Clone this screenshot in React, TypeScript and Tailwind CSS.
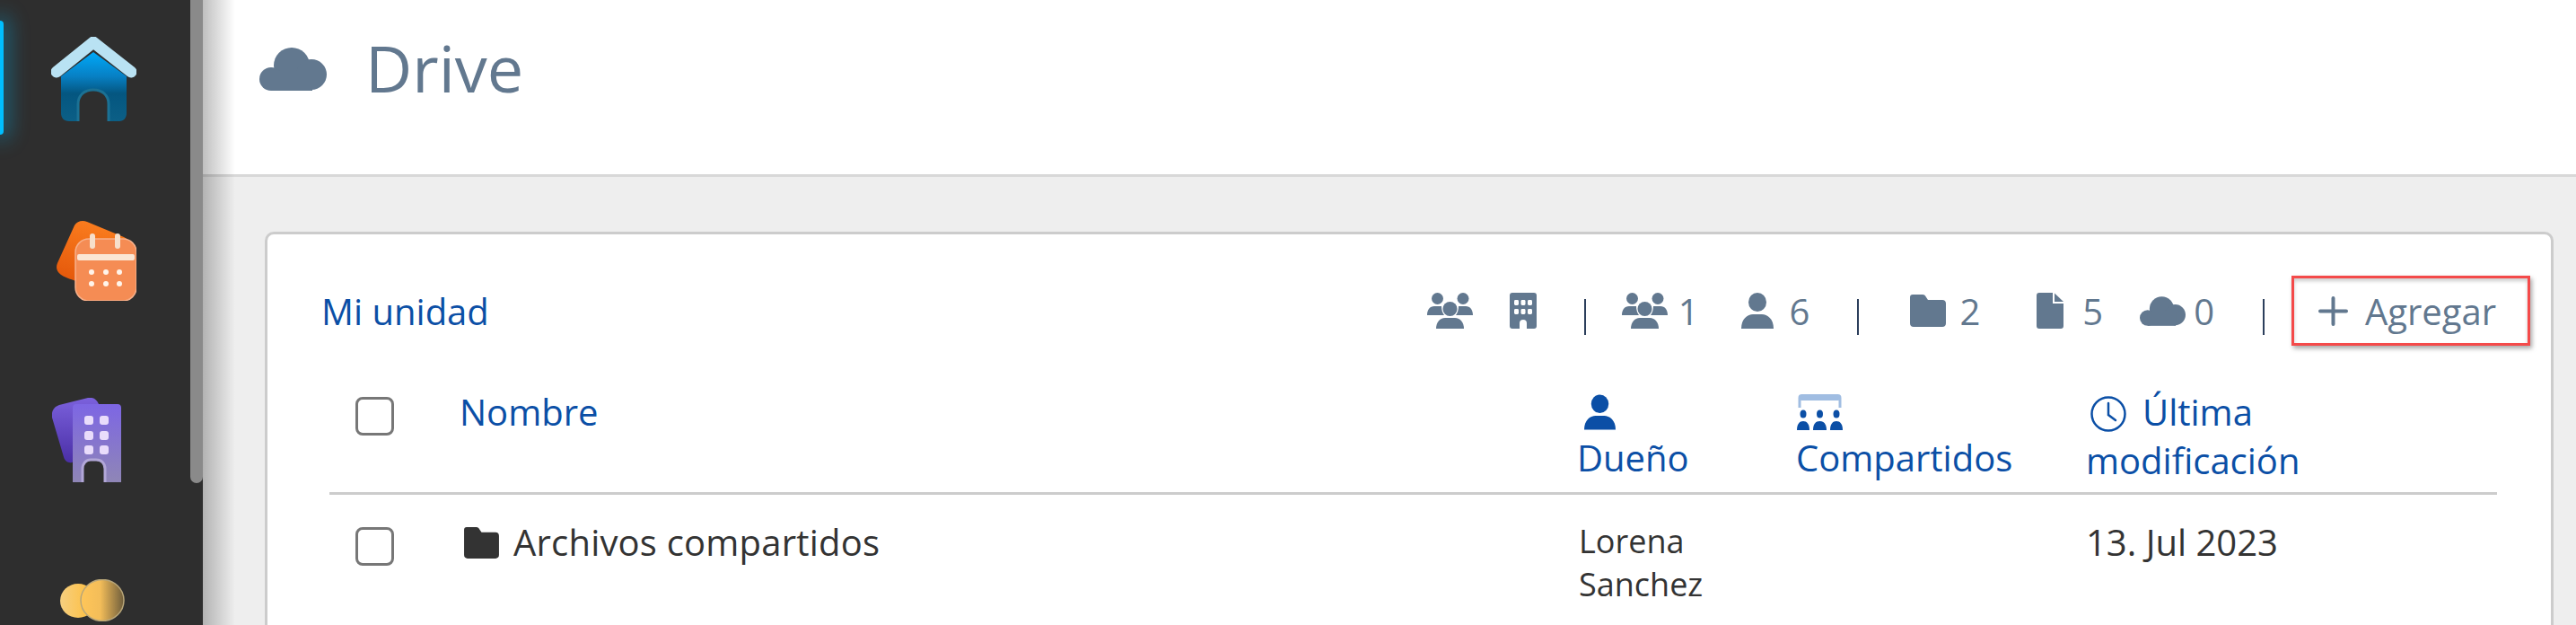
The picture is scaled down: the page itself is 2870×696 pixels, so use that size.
import React from "react";

const SLATE = "#62788f";
const BLUE = "#0b4fa6";

function Person({ w, h, color = SLATE }: { w: number; h: number; color?: string }) {
  return (
    <svg width={w} height={h} viewBox="0 0 36 40" className="block shrink-0" aria-hidden>
      <ellipse cx="18" cy="10.5" rx="10" ry="10.5" fill={color} />
      <path d="M0 40C0 29 7 24 13 24H23C29 24 36 29 36 40Z" fill={color} />
    </svg>
  );
}

function Group() {
  return (
    <svg width="51" height="40" viewBox="0 0 51 40" className="block shrink-0" aria-hidden>
      <g fill={SLATE}>
        <ellipse cx="11.5" cy="6.5" rx="6.5" ry="6.5" />
        <ellipse cx="40" cy="6.5" rx="6.5" ry="6.5" />
        <path d="M0 25C0 19 3 15 8 15H16C16 19 17 22 19 25Z" />
        <path d="M51 25C51 19 48 15 43 15H35C35 19 34 22 32 25Z" />
        <ellipse cx="25.5" cy="18" rx="8" ry="8" />
        <path d="M10 40C10 33 14 28 20 28H31C37 28 41 33 41 40Z" />
      </g>
    </svg>
  );
}

function Building() {
  return (
    <svg width="30" height="40" viewBox="0 0 30 40" className="block shrink-0" aria-hidden>
      <path d="M3 0H27a3 3 0 0 1 3 3V37a3 3 0 0 1-3 3H19V34a4 4 0 0 0-8 0V40H3a3 3 0 0 1-3-3V3a3 3 0 0 1 3-3Z" fill={SLATE} />
      <g fill="#fff">
        <rect x="5" y="8" width="5" height="6" rx="1.4" /><rect x="12.5" y="8" width="5" height="6" rx="1.4" /><rect x="20" y="8" width="5" height="6" rx="1.4" />
        <rect x="5" y="18" width="5" height="6" rx="1.4" /><rect x="12.5" y="18" width="5" height="6" rx="1.4" /><rect x="20" y="18" width="5" height="6" rx="1.4" />
      </g>
    </svg>
  );
}

function Folder({ w, h, color }: { w: number; h: number; color: string }) {
  return (
    <svg width={w} height={h} viewBox="0 0 40 36" className="block shrink-0" aria-hidden>
      <path d="M3 0H14C16 0 17 1 18 3L20 6H36C38.500 6 40 7.500 40 10V32C40 34.500 38.500 36 36 36H4C1.500 36 0 34.500 0 32V3C0 1 1 0 3 0Z" fill={color} />
    </svg>
  );
}

function FileIcon() {
  return (
    <svg width="30" height="40" viewBox="0 0 30 40" className="block shrink-0" aria-hidden>
      <path d="M3 0H18V12H30V37a3 3 0 0 1-3 3H3a3 3 0 0 1-3-3V3a3 3 0 0 1 3-3Z" fill={SLATE} />
      <path d="M20 0.500L30 10H20Z" fill={SLATE} />
    </svg>
  );
}

function Cloud({ w, h }: { w: number; h: number }) {
  return (
    <svg width={w} height={h} viewBox="0 0 75 48" className="block shrink-0" aria-hidden>
      <g fill={SLATE}>
        <circle cx="36" cy="20" r="20" />
        <circle cx="58" cy="30" r="17" />
        <circle cx="13" cy="35" r="13" />
        <rect x="13" y="26" width="46" height="22" />
      </g>
    </svg>
  );
}

function Sep({ ml }: { ml: string }) {
  return <span className={`block h-[40px] w-[2px] shrink-0 translate-y-[7px] bg-[#2c3f5c] ${ml}`} />;
}

function Num({ n, ml }: { n: string; ml: string }) {
  return <span className={`text-[40px] font-normal leading-[47px] text-[#62788f] ${ml}`}>{n}</span>;
}

function Checkbox({ mt }: { mt: string }) {
  return <span className={`block h-[43px] w-[43px] rounded-[8px] border-[3px] border-[#777] bg-white ${mt}`} />;
}

function HomeIcon() {
  return (
    <svg width="95" height="94" viewBox="0 0 95 94" className="block" aria-hidden>
      <defs>
        <linearGradient id="homeBody" x1="0" y1="0" x2="0" y2="1">
          <stop offset="0" stopColor="#00a9f9" />
          <stop offset="0.35" stopColor="#0780c4" />
          <stop offset="0.6" stopColor="#045680" />
          <stop offset="1" stopColor="#0c5f86" />
        </linearGradient>
      </defs>
      <path d="M11 44L47 17L84 44V85C84 90 81 94 76 94H64V75C64 65 57 59 47 59C37 59 30 65 30 75V94H20C14 94 11 90 11 85Z" fill="url(#homeBody)" />
      <path d="M30 94V75C30 65 37 59 47 59C57 59 64 65 64 75V94" fill="none" stroke="#1b7194" strokeWidth="3" />
      <path d="M6 39L47 6L89 39" fill="none" stroke="#b9e2f3" strokeWidth="13" strokeLinecap="round" strokeLinejoin="round" />
    </svg>
  );
}

function CalendarIcon() {
  return (
    <svg width="89" height="89" viewBox="0 0 89 89" className="block" aria-hidden>
      <defs>
        <linearGradient id="calBack" x1="0.6" y1="0" x2="0.3" y2="1">
          <stop offset="0" stopColor="#fb7e1f" />
          <stop offset="1" stopColor="#e4570a" />
        </linearGradient>
      </defs>
      <path d="M20 5C23 0 29-1 34 1L75 18C80 20 82 25 82 30L50 70C44 75 12 65 5 60C0 56-1 52 1 47Z" fill="url(#calBack)" />
      <rect x="21" y="20" width="68" height="69" rx="15" fill="#f58c54" stroke="#f7b08a" strokeWidth="1.500" />
      <rect x="23" y="37" width="64" height="7" rx="2" fill="#fbe6d4" />
      <rect x="37" y="14" width="6" height="17" rx="3" fill="#f6dfcb" />
      <rect x="65" y="14" width="6" height="17" rx="3" fill="#f6dfcb" />
      <g fill="#fff4ea">
        <circle cx="39" cy="57" r="3" /><circle cx="55" cy="57" r="3" /><circle cx="70" cy="57" r="3" />
        <circle cx="39" cy="70" r="3" /><circle cx="55" cy="70" r="3" /><circle cx="70" cy="70" r="3" />
      </g>
    </svg>
  );
}

function OfficeIcon() {
  return (
    <svg width="77" height="94" viewBox="0 0 77 94" className="block" aria-hidden>
      <defs>
        <linearGradient id="offBack" x1="0" y1="0" x2="0" y2="1">
          <stop offset="0" stopColor="#7b61dc" />
          <stop offset="1" stopColor="#4a2fa6" />
        </linearGradient>
        <linearGradient id="offFront" x1="0" y1="0" x2="0" y2="1">
          <stop offset="0" stopColor="#7d66e4" />
          <stop offset="1" stopColor="#8f86b6" />
        </linearGradient>
      </defs>
      <path d="M8 8L40 0C46-1 50 2 52 7L60 60L22 72C18 73 14 70 13 66L0 22C-1 15 2 10 8 8Z" fill="url(#offBack)" />
      <path d="M27 7H73C75.500 7 77 8.500 77 11V94H58V79C58 74 54 70 50 70H42C38 70 35 74 35 79V94H23V11C23 8.500 24.500 7 27 7Z" fill="url(#offFront)" />
      <path d="M34 94V79C34 73 38 69 43 69H49C55 69 59 73 59 79V94" fill="none" stroke="#b2a7d8" strokeWidth="3" />
      <g fill="#e9dcfb">
        <rect x="36" y="20" width="10" height="10" rx="3" /><rect x="53" y="20" width="10" height="10" rx="3" />
        <rect x="36" y="37" width="10" height="10" rx="3" /><rect x="53" y="37" width="10" height="10" rx="3" />
        <rect x="36" y="53" width="10" height="10" rx="3" /><rect x="53" y="53" width="10" height="10" rx="3" />
      </g>
    </svg>
  );
}

function CoinsIcon() {
  return (
    <svg width="72" height="47" viewBox="0 0 72 47" className="block" aria-hidden>
      <defs>
        <linearGradient id="coinA" x1="0" y1="0" x2="1" y2="0">
          <stop offset="0" stopColor="#f6cf80" />
          <stop offset="1" stopColor="#ffbc35" />
        </linearGradient>
        <linearGradient id="coinB" x1="0" y1="0" x2="1" y2="0">
          <stop offset="0" stopColor="#ffc659" />
          <stop offset="0.45" stopColor="#f3bd59" />
          <stop offset="1" stopColor="#6e5d3c" />
        </linearGradient>
      </defs>
      <ellipse cx="20" cy="24" rx="20" ry="19" fill="url(#coinA)" />
      <ellipse cx="47" cy="23.500" rx="24" ry="23" fill="url(#coinB)" stroke="#b8a679" strokeWidth="1.500" />
    </svg>
  );
}

export default function App() {
  return (
    <div className="flex h-[696px] w-[2870px] overflow-hidden bg-[#2e2e2e] font-['Open_Sans',sans-serif] text-[40px] font-normal text-[#333]">
      <aside className="flex w-[226px] shrink-0 items-start bg-[#2e2e2e]">
        <div className="relative h-full w-[212px] shrink-0">
          <span className="absolute left-0 top-[23px] h-[127px] w-[4px] rounded-r-[4px] bg-[#00bfff] shadow-[0_0_22px_6px_rgba(0,190,255,0.4)]" />
          <nav className="flex flex-col pt-[41px]">
            <div className="ml-[57px]"><HomeIcon /></div>
            <div className="ml-[63px] mt-[111px]"><CalendarIcon /></div>
            <div className="ml-[58px] mt-[108px]"><OfficeIcon /></div>
            <div className="ml-[67px] mt-[108px]"><CoinsIcon /></div>
          </nav>
        </div>
        <div className="h-[538px] w-[14px] shrink-0 rounded-b-[7px] bg-[#8a8a8a]" />
      </aside>

      <main className="relative flex min-w-0 flex-1 flex-col bg-[#eeeeee]">
        <span className="pointer-events-none absolute inset-y-0 left-0 w-[36px] bg-linear-to-r from-black/25 to-transparent" />
        <header className="flex h-[197px] shrink-0 items-start border-b-[3px] border-[#d8d8d8] bg-white pl-[63px]">
          <div className="mt-[53px]"><Cloud w={75} h={48} /></div>
          <h1 className="ml-[43px] mt-[26px] text-[72px] font-normal leading-[98px] text-[#62788f]">Drive</h1>
        </header>

        <section className="ml-[69px] mt-[61px] h-[600px] w-[2550px] shrink-0 rounded-t-[10px] border-x-[3px] border-t-[3px] border-[#cccccc] bg-white pt-[46px]">
          <div className="flex h-[78px] items-center">
            <a className="ml-[60px] pt-[2px] text-[40px] font-normal text-[#0b4fa6]">Mi unidad</a>
            <div className="ml-auto mr-[23px] flex items-center">
              <Group />
              <span className="ml-[41.5px]"><Building /></span>
              <Sep ml="ml-[52.5px]" />
              <span className="ml-[40.5px]"><Group /></span>
              <Num n="1" ml="ml-[11.5px]" />
              <span className="ml-[47.5px]"><Person w={36} h={40} /></span>
              <Num n="6" ml="ml-[17.5px]" />
              <Sep ml="ml-[53px]" />
              <span className="ml-[57px]"><Folder w={40} h={36} color={SLATE} /></span>
              <Num n="2" ml="ml-[15px]" />
              <span className="ml-[63px]"><FileIcon /></span>
              <Num n="5" ml="ml-[21px]" />
              <span className="ml-[41px]"><Cloud w={51} h={35} /></span>
              <Num n="0" ml="ml-[9px]" />
              <Sep ml="ml-[54px]" />
              <button className="ml-[30px] flex h-[78px] w-[266px] items-center border-[3px] border-[#f44a4a] bg-white pl-[27px] shadow-[2px_3px_5px_rgba(0,0,0,0.35),inset_0_3px_4px_rgba(0,0,0,0.2)]">
                <svg width="33" height="33" viewBox="0 0 33 33" className="block shrink-0" aria-hidden>
                  <path d="M16.500 2V31M2 16.500H31" stroke={SLATE} strokeWidth="4" strokeLinecap="round" />
                </svg>
                <span className="ml-[19px] text-[40px] font-normal leading-[47px] text-[#62788f]">Agregar</span>
              </button>
            </div>
          </div>

          <div className="ml-[69px] mr-[60px]">
            <div className="grid h-[166px] grid-cols-[118px_1245px_243px_323px_1fr] border-b-[3px] border-[#cccccc] pl-[29px] pt-[50px] text-[#0b4fa6] font-normal">
              <Checkbox mt="mt-[7px]" />
              <span className="-ml-[2px] leading-[47px]">Nombre</span>
              <div className="flex flex-col">
                <span className="ml-[6px] mt-[4px]"><Person w={35} h={40} color={BLUE} /></span>
                <span className="-ml-[2px] mt-[7px] leading-[47px]">Dueño</span>
              </div>
              <div className="flex flex-col">
                <svg width="51" height="40" viewBox="0 0 51 40" className="mt-[4px] block" aria-hidden>
                  <path d="M3 15V4C3 2.500 4 1.500 5.500 1.500H45.500C47 1.500 48 2.500 48 4V15" fill="none" stroke="#a0bde2" strokeWidth="3" />
                  <rect x="3" y="1" width="45" height="6" rx="2" fill="#a0bde2" />
                  <g fill={BLUE}>
                    <ellipse cx="7" cy="22" rx="3.500" ry="4.500" /><ellipse cx="25.500" cy="22" rx="3.500" ry="4.500" /><ellipse cx="44" cy="22" rx="3.500" ry="4.500" />
                    <path d="M0 40C0 33 3 30 7 30C11 30 14 33 14 40Z" /><path d="M18 40C18 33 21 30 25.500 30C30 30 33 33 33 40Z" /><path d="M37 40C37 33 40 30 44 30C48 30 51 33 51 40Z" />
                  </g>
                </svg>
                <span className="-ml-[1px] mt-[7px] leading-[47px]">Compartidos</span>
              </div>
              <div className="flex flex-col">
                <div className="flex items-center">
                  <svg width="40" height="40" viewBox="0 0 40 40" className="ml-[4px] mt-[4px] block shrink-0" aria-hidden>
                    <circle cx="20" cy="20" r="18.500" fill="none" stroke={BLUE} strokeWidth="2.500" />
                    <path d="M20 8V21L28 27" fill="none" stroke={BLUE} strokeWidth="2.500" strokeLinecap="round" />
                  </svg>
                  <span className="ml-[18px] leading-[47px]">Última</span>
                </div>
                <span className="-ml-[1px] mt-[7px] leading-[47px]">modificación</span>
              </div>
            </div>

            <div className="grid grid-cols-[118px_1245px_243px_323px_1fr] pl-[29px] pt-[28px] font-normal text-[#333]">
              <Checkbox mt="mt-[8px]" />
              <div className="flex items-start">
                <span className="ml-[3px] mt-[8px]"><Folder w={39} h={35} color="#333333" /></span>
                <span className="ml-[16px] mt-[1px] leading-[47px] tracking-[0.2px]">Archivos compartidos</span>
              </div>
              <span className="text-[36px] leading-[48px]">Lorena<br />Sanchez</span>
              <span />
              <span className="-ml-[1px] mt-[1px] leading-[47px]">13. Jul 2023</span>
            </div>
          </div>
        </section>
      </main>
    </div>
  );
}
